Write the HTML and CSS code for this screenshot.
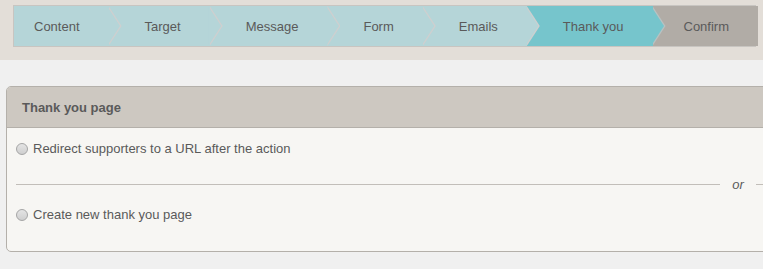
FILE: index.html
```html
<!DOCTYPE html>
<html lang="en">
<head>
<meta charset="utf-8">
<title>Thank you page</title>
<link rel="stylesheet" href="styles.css">
</head>
<body>
<header class="topbar">
  <ol class="wizard">
    <li class="step step-first">Content</li>
    <li class="step">Target</li>
    <li class="step">Message</li>
    <li class="step">Form</li>
    <li class="step">Emails</li>
    <li class="step step-current">Thank you</li>
    <li class="step step-last">Confirm</li>
  </ol>
</header>
<main class="content">
  <section class="panel">
    <h2 class="panel-title">Thank you page</h2>
    <div class="panel-body">
      <label class="option"><input type="radio" name="ty" class="radio"><span>Redirect supporters to a URL after the action</span></label>
      <div class="divider"><span class="divider-line"></span><span class="divider-text">or</span><span class="divider-line"></span></div>
      <label class="option"><input type="radio" name="ty" class="radio"><span>Create new thank you page</span></label>
    </div>
  </section>
</main>
</body>
</html>
```
FILE: styles.css
```css
html, body {
  margin: 0;
  padding: 0;
}
body {
  background: #f0f0f0;
  font-family: "Liberation Sans", Arial, sans-serif;
  font-size: 13px;
  color: #5a5a5a;
  overflow: hidden;
}
.topbar {
  background: #e3ded8;
  height: 60px;
  padding: 5px 7px 0 13px;
  box-sizing: border-box;
}
.wizard {
  list-style: none;
  margin: 0;
  padding: 0;
  display: flex;
  height: 42px;
  box-sizing: border-box;
  border: 1px solid #c8c5c1;
  background: #b1aca6;
}
.step {
  position: relative;
  display: flex;
  align-items: center;
  background: #b5d5d8;
  padding: 0 29px 0 36px;
  white-space: nowrap;
}
.step-first {
  padding-left: 20px;
}
.step-current {
  background: #76c5cc;
}
.step-last {
  background: #b1aca6;
  padding-left: 31px;
  flex: 1;
}
.step:not(.step-last)::before,
.step:not(.step-last)::after {
  content: "";
  position: absolute;
  top: 0;
  bottom: 0;
  width: 13px;
  clip-path: polygon(0 0, 100% 50%, 0 100%);
}
.step:not(.step-last)::before {
  left: 100%;
  background: #cfcfcf;
  z-index: 1;
}
.step:not(.step-last)::after {
  left: calc(100% - 1.5px);
  background: inherit;
  z-index: 2;
}
.step-current::before {
  background: #b9c2c2 !important;
}
.content {
  padding: 26px 0 0 6px;
}
.panel {
  width: 1462px;
  border: 1px solid #b4b0aa;
  border-radius: 5px;
  background: #f7f6f3;
  overflow: hidden;
}
.panel-title {
  margin: 0;
  height: 41px;
  box-sizing: border-box;
  display: flex;
  align-items: center;
  padding: 0 15px;
  background: #cdc8c1;
  border-bottom: 1px solid #b4b0aa;
  font-size: 13px;
  font-weight: bold;
  color: #5a5a5a;
}
.panel-body {
  padding: 13px 9px 28px 9px;
}
.option {
  display: flex;
  align-items: center;
  height: 16px;
  line-height: 16px;
}
.radio {
  appearance: none;
  -webkit-appearance: none;
  margin: 0 5px 0 0;
  width: 12px;
  height: 12px;
  border-radius: 50%;
  border: 1px solid #a5a5a5;
  background: linear-gradient(#e4e4e4, #cfcfcf);
  box-sizing: border-box;
}
.divider {
  display: flex;
  align-items: center;
  margin: 19px 0 14px;
  height: 17px;
}
.divider-line {
  flex: 1;
  height: 1px;
  background: #c2beb9;
}
.divider-text {
  padding: 0 12px;
  font-style: italic;
  color: #5a5a5a;
}
```
